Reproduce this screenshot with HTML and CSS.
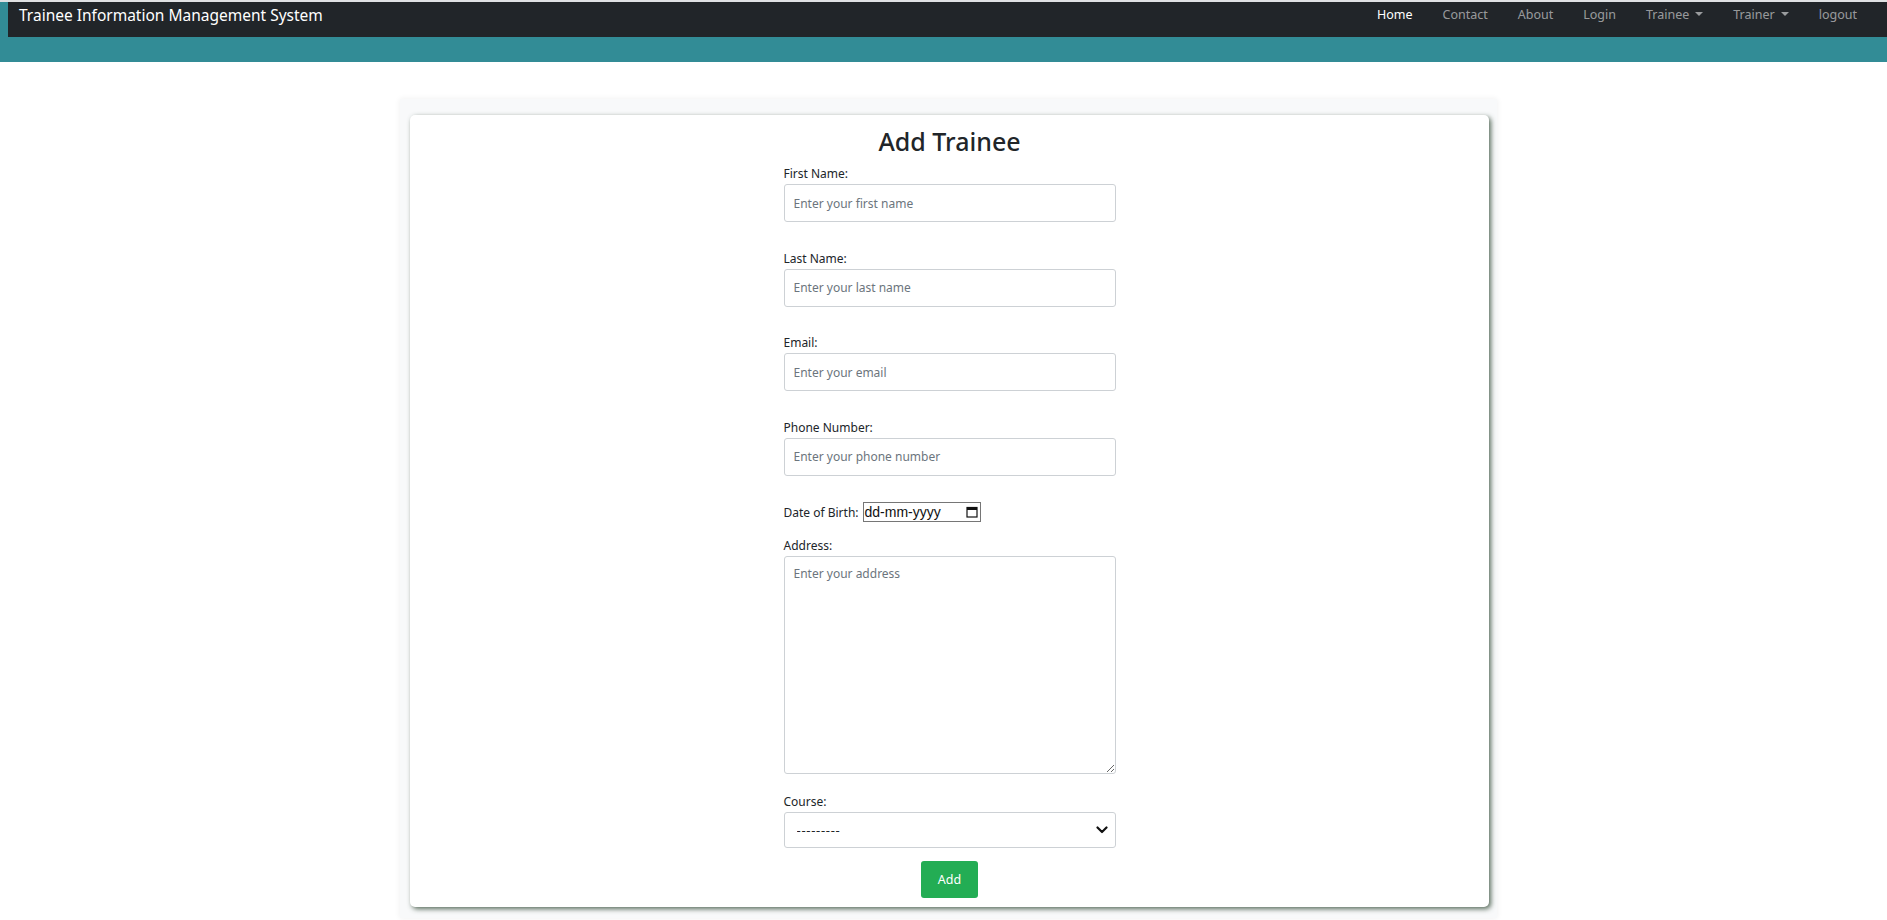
FILE: index.html
```html
<!DOCTYPE html>
<html lang="en">
<head>
<meta charset="utf-8">
<title>Add Trainee</title>
<link rel="stylesheet" href="styles.css">
</head>
<body>
<header class="topbar">
  <nav class="navbar">
    <a class="brand" href="#">Trainee Information Management System</a>
    <ul class="nav">
      <li><a class="nav-link active" href="#">Home</a></li>
      <li><a class="nav-link" href="#">Contact</a></li>
      <li><a class="nav-link" href="#">About</a></li>
      <li><a class="nav-link" href="#">Login</a></li>
      <li><a class="nav-link dropdown" href="#">Trainee<span class="caret"></span></a></li>
      <li><a class="nav-link dropdown" href="#">Trainer<span class="caret"></span></a></li>
      <li><a class="nav-link" href="#">logout</a></li>
    </ul>
  </nav>
</header>

<main class="wrap">
  <div class="card">
    <h2 class="title">Add Trainee</h2>
    <form class="form">
      <div class="field">
        <label class="label">First Name:</label>
        <input class="control" type="text" placeholder="Enter your first name">
      </div>
      <div class="field">
        <label class="label">Last Name:</label>
        <input class="control" type="text" placeholder="Enter your last name">
      </div>
      <div class="field">
        <label class="label">Email:</label>
        <input class="control" type="text" placeholder="Enter your email">
      </div>
      <div class="field">
        <label class="label">Phone Number:</label>
        <input class="control" type="text" placeholder="Enter your phone number">
      </div>
      <div class="dob">
        <span class="dob-label">Date of Birth:</span>
        <span class="date-box">
          <span class="date-text">dd-mm-yyyy</span>
          <svg class="cal" width="12" height="12" viewBox="0 0 12 12">
            <rect x="1" y="1.5" width="10" height="9.5" fill="none" stroke="#111" stroke-width="1.2"/>
            <rect x="1" y="1.5" width="10" height="2.5" fill="#111"/>
          </svg>
        </span>
      </div>
      <div class="field field-address">
        <label class="label">Address:</label>
        <textarea class="control area" placeholder="Enter your address"></textarea>
      </div>
      <div class="field field-course">
        <label class="label">Course:</label>
        <div class="select-wrap">
          <select class="control select">
            <option>---------</option>
          </select>
          <svg class="chev" width="12" height="8" viewBox="0 0 12 8">
            <path d="M1.5 1.5 6 6l4.5-4.5" fill="none" stroke="#111" stroke-width="2.2" stroke-linecap="round" stroke-linejoin="round"/>
          </svg>
        </div>
      </div>
      <div class="actions">
        <button class="btn" type="button">Add</button>
      </div>
    </form>
  </div>
</main>
</body>
</html>
```

FILE: styles.css
```css
* { box-sizing: border-box; }

html, body { margin: 0; padding: 0; }

body {
  background: #ffffff;
  border-top: 2px solid #dfe1e3;
  font-family: "Noto Sans", "Open Sans", "DejaVu Sans", sans-serif;
  color: #212529;
  height: 920px;
  overflow: hidden;
}

.topbar {
  background: #328c96;
  padding: 0 0 25px 8px;
}

.navbar {
  background: #212529;
  height: 35px;
  display: flex;
  align-items: flex-start;
  justify-content: space-between;
  padding: 0 15px 0 11px;
}

.brand {
  color: #ffffff;
  text-decoration: none;
  font-size: 15.5px;
  line-height: 22px;
  padding-top: 2px;
  white-space: nowrap;
}

.nav {
  list-style: none;
  margin: 0;
  padding: 0;
  display: flex;
}

.nav-link {
  display: flex;
  align-items: center;
  color: rgba(255, 255, 255, 0.55);
  text-decoration: none;
  font-size: 12.5px;
  line-height: 18px;
  padding: 4px 15px 0;
  white-space: nowrap;
}

.nav-link.active { color: #ffffff; }

.caret {
  display: inline-block;
  width: 0;
  height: 0;
  margin-left: 6px;
  margin-bottom: 2px;
  border-top: 4.5px solid rgba(255, 255, 255, 0.55);
  border-left: 4.5px solid transparent;
  border-right: 4.5px solid transparent;
}

.wrap {
  width: 1097px;
  margin: 37px 0 0 400px;
  padding: 16px 8px 11px 10px;
  background: #f8f9fa;
  box-shadow: 0 0 6px rgba(0, 0, 0, 0.07);
}

.card {
  background: #ffffff;
  border-radius: 5px;
  box-shadow: 2px 2px 5px rgba(60, 82, 64, 0.85);
  padding: 10px 0 9px;
}

.title {
  margin: 0 0 7px;
  text-align: center;
  font-size: 25px;
  font-weight: 500;
  line-height: 32px;
  color: #212529;
}

.form {
  width: 332px;
  margin: 0 auto;
}

.field { margin-bottom: 26.5px; }
.field-address { margin-bottom: 18px; }
.field-course { margin-bottom: 13px; }

.label {
  display: block;
  font-size: 12px;
  line-height: 20px;
}

.control {
  display: block;
  width: 100%;
  height: 38px;
  border: 1px solid #cdd1d5;
  border-radius: 3px;
  padding: 0 9px;
  font-family: inherit;
  font-size: 12px;
  color: #212529;
  background: #ffffff;
  outline: none;
}

.control::placeholder { color: #6c757d; }

.area {
  height: 218px;
  padding-top: 8px;
  resize: vertical;
}

.dob {
  display: flex;
  align-items: center;
  height: 20px;
  margin-bottom: 14px;
  font-size: 12px;
}

.dob-label { margin-right: 4px; }

.date-box {
  display: flex;
  align-items: center;
  justify-content: space-between;
  width: 118px;
  height: 20px;
  border: 1px solid #767676;
  padding: 0 2px 0 1px;
  font-family: "Liberation Sans", Arial, sans-serif;
  font-size: 14px;
  color: #111;
}

.select-wrap { position: relative; }

.select {
  height: 36px;
  appearance: none;
  -webkit-appearance: none;
  padding-left: 12px;
  font-size: 13px;
  letter-spacing: 0.7px;
}

.chev {
  position: absolute;
  right: 8px;
  top: 14px;
}

.actions {
  display: flex;
  justify-content: center;
}

.btn {
  width: 57px;
  height: 37px;
  border: none;
  border-radius: 3px;
  background: #23ad54;
  color: #ffffff;
  font-family: inherit;
  font-size: 12.5px;
}
```
